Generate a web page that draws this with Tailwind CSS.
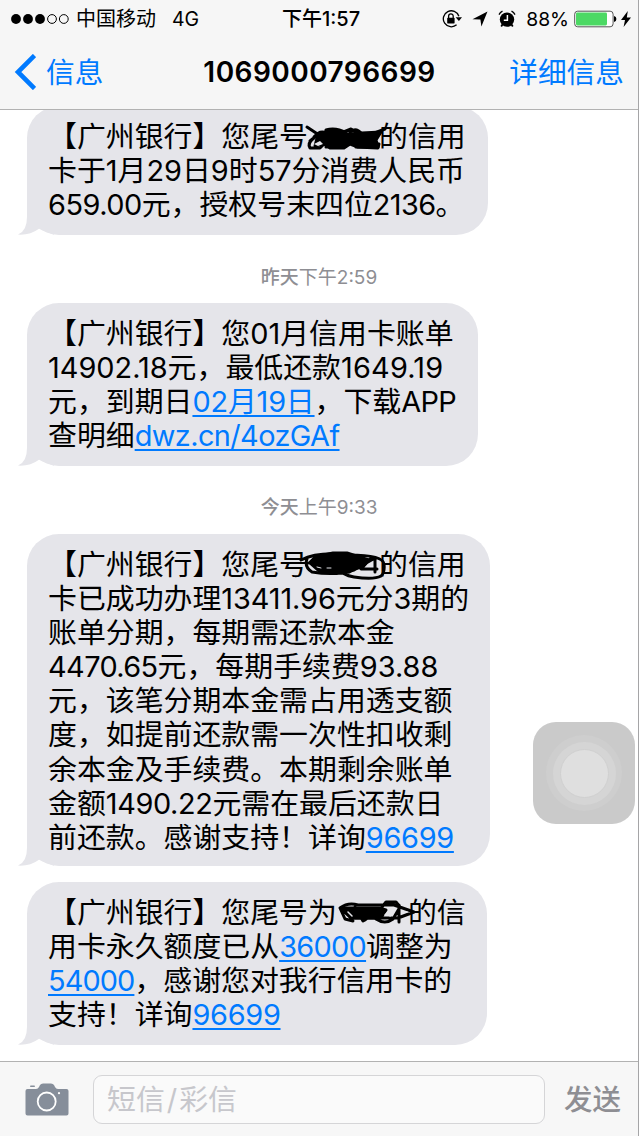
<!DOCTYPE html>
<html lang="zh-CN">
<head>
  <meta charset="UTF-8" />
  <meta name="viewport" content="width=device-width, initial-scale=1.0" />
  <title>1069000796699</title>
  <script src="https://cdn.jsdelivr.net/npm/@tailwindcss/browser@4"></script>
</head>
<body class="font-['Inter','Noto_Sans_CJK_SC',sans-serif] bg-white text-black antialiased">
  <div class="w-[639px] h-[1136px] flex flex-col overflow-hidden border-r border-[#a5a5a7] whitespace-nowrap">

    <header class="relative z-10 shrink-0 h-[110px] bg-[#f6f6f6] border-b border-[#b2b2b2]">
      <!-- Status bar -->
      <div class="h-9 grid grid-cols-[1fr_auto_1fr] items-center text-[20px] leading-9">
        <div class="flex items-center pl-[11px]">
          <svg class="w-[58px] h-3" viewBox="0 0 58 12">
            <circle cx="5" cy="6" r="4.9" /><circle cx="17" cy="6" r="4.9" /><circle cx="29" cy="6" r="4.9" />
            <g fill="none" stroke="#000"><circle cx="41" cy="6" r="4.4" /><circle cx="52.8" cy="6" r="4.4" /></g>
          </svg>
          <span class="ml-[7px] pt-px">中国移动</span>
          <span class="ml-4 pt-px text-[19.5px]">4G</span>
        </div>
        <div class="font-medium text-[20px] pl-1 pt-px">下午1:57</div>
        <div class="flex items-center justify-end pr-[7px]">
          <svg class="w-5 h-5" viewBox="0 0 20 20">
            <path d="M16.900 7.200A8 8 0 1 0 14.600 15.800" fill="none" stroke="#000" stroke-width="1.300" />
            <path d="M13.600 8.200H20L16.900 12Z" />
            <rect x="5.200" y="8.800" width="7.400" height="5.600" rx=".6" />
            <path d="M6.600 9V7.200a2.300 2.300 0 0 1 4.600 0V9" fill="none" stroke="#000" stroke-width="1.300" />
          </svg>
          <svg class="ml-[10px] w-4 h-4" viewBox="0 0 16 16"><path d="M15.500.5L9.400 15.500 8.400 8.600 .5 8.200Z" /></svg>
          <svg class="ml-[10px] w-[18px] h-[18px]" viewBox="0 0 18 18">
            <circle cx="9" cy="9.600" r="7.200" />
            <path d="M4.500 14.500l-1.300 2M13.500 14.500l1.300 2" stroke="#000" stroke-width="1.800" />
            <path d="M1 4.600A8.500 8.500 0 0 1 4.500 1.200M13.500 1.200a8.500 8.500 0 0 1 3.500 3.400" fill="none" stroke="#000" stroke-width="1.300" />
            <path d="M9.400 5v5.200H5.800" fill="none" stroke="#fff" stroke-width="1.500" />
          </svg>
          <span class="ml-[10px] pt-px text-[19.3px]">88%</span>
          <svg class="ml-[5px] w-[43px] h-[18px]" viewBox="0 0 43 18">
            <rect x=".7" y="1.200" width="38.400" height="15.600" rx="3" fill="#fff" stroke="#555" />
            <rect x="2" y="2.600" width="31" height="12.800" rx="1.400" fill="#4cd964" />
            <path d="M40 6q2.400.6 2.400 3t-2.400 3Z" />
          </svg>
          <svg class="ml-[4px] w-[10px] h-[18px]" viewBox="0 0 10 18"><path d="M6.800 1L0 10h4L2.600 17 10 7.400H5.800Z" /></svg>
        </div>
      </div>
      <!-- Navigation bar -->
      <div class="h-[72px] grid grid-cols-[1fr_auto_1fr] items-center text-[#007aff] text-[28.500px]">
        <a class="flex items-center pl-[14px]">
          <svg class="w-[22px] h-9" viewBox="0 0 22 36"><path d="M20.500 1.500L4 18l16.500 16.500" fill="none" stroke="#007aff" stroke-width="4.600" /></svg>
          <span class="ml-[10px] pt-[2px] text-[28.7px]">信息</span>
        </a>
        <h1 class="font-semibold text-[28px] tracking-[0.45px] text-black pl-px">1069000796699</h1>
        <a class="text-right pr-[14px] pt-[2px] text-[28.7px]">详细信息</a>
      </div>
    </header>

    <main class="flex-1 min-h-0 flex flex-col items-start pl-[27px] -mt-1 text-[28.9px] leading-[34.1px]">
      <div class="relative shrink-0 w-[461px] h-[129px] rounded-[32px] bg-[#e5e5ea] pl-[21px] pt-[14px]">
        <svg class="absolute -left-[9px] bottom-0 w-[36px] h-[34px]" viewBox="0 0 36 34"><path d="M9 0v16Q9 30 0 33.600q12 .8 21-5.800l15 6V0Z" fill="#e5e5ea" /></svg>
        <div class="relative">
          <p>【广州银行】您尾号<span class="relative inline-block w-[71px] h-5"><svg class="absolute -left-1 -top-[4px] w-[84px] h-[30px]" viewBox="0 0 84 30" fill="none" stroke="#000" stroke-width="3" stroke-linejoin="round" stroke-linecap="round"><path d="M3 4l12 8 13-5 9 3 10-4 10 5 11 0 13-5M6 18l10-8 9 6-9 9H6q-3-5 4-10M10 14q8-10 17 0t-5 10M22 7q10-3 20 3M46 9q6-5 12 2M52 24l22 1 1-4-16 0" /><path d="M14 11l12-3 18 3 14-1 19-1-5 8 2 7H54l-8-3-6 4H26l-6-4-9 2Z" fill="#000" /><path d="M10 21l6-3 3 3-5 2Z" fill="#e5e5ea" stroke="none" /></svg></span>的信用</p>
          <p>卡于1月29日9时57分消费人民币</p>
          <p><span class="tracking-[-0.5px]">659.00</span>元，授权号末四位<span class="tracking-[-0.6px]">2136</span>。</p>
        </div>
      </div>

      <time class="shrink-0 self-center -ml-[27px] mt-[32px] h-[22px] leading-[22px] text-[19px] text-[#8e8e93]"><span class="font-medium">昨天</span>下午2:59</time>

      <div class="relative shrink-0 mt-[14px] w-[451px] h-[163px] rounded-[32px] bg-[#e5e5ea] pl-[21px] pt-[14px]">
        <svg class="absolute -left-[9px] bottom-0 w-[36px] h-[34px]" viewBox="0 0 36 34"><path d="M9 0v16Q9 30 0 33.600q12 .8 21-5.800l15 6V0Z" fill="#e5e5ea" /></svg>
        <div class="relative">
          <p>【广州银行】您01月信用卡账单</p>
          <p>14902.18元，最低还款<span class="tracking-[0.2px]">1649.19</span></p>
          <p>元，到期日<a class="text-[#007aff] underline decoration-2 underline-offset-[3px] tracking-[-0.2px]">02月19日</a>，下载<span class="tracking-[-0.7px]">APP</span></p>
          <p>查明细<a class="text-[#007aff] underline decoration-2 underline-offset-[3px] tracking-[-0.6px]">dwz.cn/4ozGAf</a></p>
        </div>
      </div>

      <time class="shrink-0 self-center -ml-[27px] mt-[31px] h-[22px] leading-[22px] text-[19px] text-[#8e8e93]"><span class="font-medium">今天</span>上午9:33</time>

      <div class="relative shrink-0 mt-[15px] w-[463px] h-[332px] rounded-[32px] bg-[#e5e5ea] pl-[21px] pt-[14px]">
        <svg class="absolute -left-[9px] bottom-0 w-[36px] h-[34px]" viewBox="0 0 36 34"><path d="M9 0v16Q9 30 0 33.600q12 .8 21-5.800l15 6V0Z" fill="#e5e5ea" /></svg>
        <div class="relative">
          <p>【广州银行】您尾号<span class="relative z-10 inline-block w-[71px] h-5"><svg class="absolute -left-[9px] -top-[5px] w-[90px] h-[32px]" viewBox="0 0 90 32" fill="none" stroke="#000" stroke-width="3" stroke-linejoin="round" stroke-linecap="round"><path d="M2 10q18-9 48-5 34 0 35 9t-3 12q-7 4-27 1-12-2-14-8M8 9q-3 8 5 13 24 4 42-2L76 8v14M10 13q14-13 26 2t22 0M72 8L62 19h16" /><path d="M16 7l18-4h14l22 7-7 7-22 5-21-1-9-8Z" fill="#000" /><path d="M18 17l4 1M28 18l4 0" stroke="#e5e5ea" stroke-width="1" /></svg></span>的信用</p>
          <p>卡已成功办理<span class="tracking-[-0.1px]">13411.96</span>元分3期的</p>
          <p>账单分期，每期需还款本金</p>
          <p><span class="tracking-[-0.6px]">4470.65</span>元，每期手续费93.88</p>
          <p>元，该笔分期本金需占用透支额</p>
          <p>度，如提前还款需一次性扣收剩</p>
          <p>余本金及手续费。本期剩余账单</p>
          <p>金额<span class="tracking-[-0.4px]">1490.22</span>元需在最后还款日</p>
          <p>前还款。感谢支持！详询<a class="text-[#007aff] underline decoration-2 underline-offset-[3px] tracking-[-0.3px]">96699</a></p>
        </div>
      </div>

      <div class="relative shrink-0 mt-4 w-[460px] h-[163px] rounded-[32px] bg-[#e5e5ea] pl-[21px] pt-[14px]">
        <svg class="absolute -left-[9px] bottom-0 w-[36px] h-[34px]" viewBox="0 0 36 34"><path d="M9 0v16Q9 30 0 33.600q12 .8 21-5.800l15 6V0Z" fill="#e5e5ea" /></svg>
        <div class="relative">
          <p>【广州银行】您尾号为<span class="relative inline-block w-[71px] h-5"><svg class="absolute left-0 -top-[4px] w-[80px] h-[28px]" viewBox="0 0 80 28" fill="none" stroke="#000" stroke-width="3" stroke-linejoin="round" stroke-linecap="round"><path d="M3 9q8-6 18-3h36l20 7-16 6H14L3 9l5 11 8 2M18 8l8 14q8-4 3-10M45 8l4-5h10l4 5-7 12q-8 6-17 0M62 6v17" /><path d="M6 9h36l7 2-5 8H14Z" fill="#000" /><path d="M48 16l6-6M53 17l4-6M11 13l4 4M67 13h3" stroke="#e5e5ea" stroke-width="1.500" /></svg></span>的信</p>
          <p>用卡永久额度已从<a class="text-[#007aff] underline decoration-2 underline-offset-[3px] tracking-[-0.7px]">36000</a>调整为</p>
          <p><a class="text-[#007aff] underline decoration-2 underline-offset-[3px] tracking-[-0.9px]">54000</a>，感谢您对我行信用卡的</p>
          <p>支持！详询<a class="text-[#007aff] underline decoration-2 underline-offset-[3px] tracking-[-0.3px]">96699</a></p>
        </div>
      </div>
    </main>

    <footer class="shrink-0 h-[75px] flex items-center bg-[#f7f7f7] border-t border-[#b2b2b2] pl-[25px] pr-[17px]">
      <svg class="w-[44px] h-[33px]" viewBox="0 0 44 33">
        <path d="M2.500 6H11q2 0 3-2l1-2q1-1.500 3-1.500h8q2 0 3 1.500l1 2q1 2 3 2h8.500q2 0 2 2v22.500q0 2-2 2h-39q-2 0-2-2V8q0-2 2-2Z" fill="#868e9a" />
        <rect x="5" y="2.400" width="5" height="1.700" rx=".8" fill="#868e9a" />
        <circle cx="21.700" cy="18.500" r="9" fill="none" stroke="#fff" stroke-width="1.800" />
        <circle cx="34" cy="10.200" r="1.100" fill="#fff" />
      </svg>
      <div class="ml-6 w-[452px] h-[49px] rounded-[9px] border-[1.5px] border-[#d5d5d7] bg-[#fafafa] pl-[13px] leading-[47px] text-[28.9px] text-[#c7c7cc]">短信<span class="px-[2px]">/</span>彩信</div>
      <button class="ml-auto pt-[3px] font-medium text-[28.500px] text-[#8e8e93]">发送</button>
    </footer>
  </div>

  <!-- AssistiveTouch -->
  <div class="absolute left-[533px] top-[722px] w-[102px] h-[102px] rounded-[23px] bg-[#cacaca] flex items-center justify-center">
    <div class="w-[76px] h-[76px] rounded-full bg-[#cecece] flex items-center justify-center">
      <div class="w-[63px] h-[63px] rounded-full bg-[#d5d5d5] flex items-center justify-center">
        <div class="w-[49px] h-[49px] rounded-full bg-[#dfdfdf] border border-[#d0d0d0]"></div>
      </div>
    </div>
  </div>
</body>
</html>
